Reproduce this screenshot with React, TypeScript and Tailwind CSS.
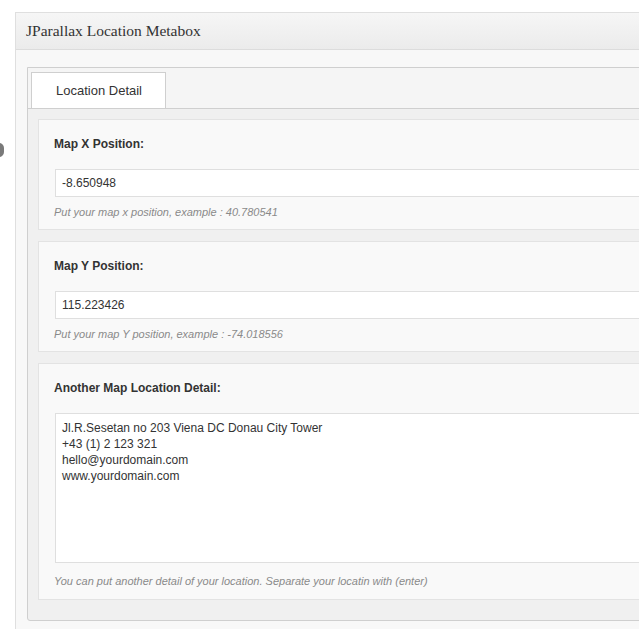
import React from "react";

type FieldProps = {
  label: string;
  value: string;
  help: string;
};

const Field: React.FC<FieldProps> = ({ label, value, help }) => (
  <div className="border border-[#e3e3e3] bg-[#f9f9f9] pl-[15px] pt-[17px] pb-[10px]">
    <div className="h-[14px] text-[12px] leading-[14px] font-bold text-[#333]">
      {label}
    </div>
    <input
      type="text"
      defaultValue={value}
      className="mt-[18px] ml-[1px] block h-[28px] w-full border border-[#dfdfdf] bg-white px-[6px] text-[12px] text-[#333] outline-none"
    />
    <div className="mt-[8px] h-[14px] text-[11px] leading-[14px] italic text-[#8a8a8a]">
      {help}
    </div>
  </div>
);

const App: React.FC = () => {
  const details = [
    "Jl.R.Sesetan no 203 Viena DC Donau City Tower",
    "+43 (1) 2 123 321",
    "hello@yourdomain.com",
    "www.yourdomain.com",
  ].join("\n");

  return (
    <div
      className="relative h-[629px] w-[639px] overflow-hidden bg-white"
      style={{ fontFamily: '"Liberation Sans", Arial, sans-serif' }}
    >
      {/* sidebar collapse handle */}
      <div className="absolute left-[-6px] top-[143px] h-[14px] w-[10px] rounded-full bg-[#7a7a7a]" />

      <div className="ml-[15px] mt-[12px] w-[700px] border border-[#dfdfdf] bg-[#f8f8f8]">
        <div className="flex h-[37px] items-center border-b border-[#dcdcdc] bg-gradient-to-b from-[#f6f6f6] to-[#ebebeb] pl-[10px]">
          <h3
            className="text-[15.5px] text-[#333]"
            style={{ fontFamily: '"Liberation Serif", "Times New Roman", serif' }}
          >
            JParallax Location Metabox
          </h3>
        </div>

        <div className="pl-[11px] pt-[17px] pb-[10px]">
          <div className="rounded-bl-[3px] border border-[#cfcfcf] bg-[#f0f0f0]">
            <div className="flex border-b border-[#cfcfcf] bg-[#f5f5f5] pl-[3px] pt-[4px]">
              <div className="flex h-[36px] w-[135px] items-center justify-center border border-b-0 border-[#cfcfcf] bg-white pl-[1px] text-[13px] text-[#333]">
                Location Detail
              </div>
            </div>

            <div className="flex flex-col gap-[11px] pl-[10px] pt-[10px] pb-[20px]">
              <Field
                label="Map X Position:"
                value="-8.650948"
                help="Put your map x position, example : 40.780541"
              />
              <Field
                label="Map Y Position:"
                value="115.223426"
                help="Put your map Y position, example : -74.018556"
              />

              <div className="border border-[#e3e3e3] bg-[#f9f9f9] pl-[15px] pt-[17px] pb-[11px]">
                <div className="h-[14px] text-[12px] leading-[14px] font-bold text-[#333]">
                  Another Map Location Detail:
                </div>
                <textarea
                  defaultValue={details}
                  className="mt-[18px] ml-[1px] block h-[150px] w-full resize-none border border-[#dfdfdf] bg-white px-[6px] pt-[6px] text-[12px] leading-[16px] text-[#333] outline-none"
                />
                <div className="mt-[11px] h-[14px] text-[11px] leading-[14px] italic text-[#8a8a8a]">
                  You can put another detail of your location. Separate your locatin with (enter)
                </div>
              </div>
            </div>
          </div>
        </div>
      </div>
    </div>
  );
};

export default App;
